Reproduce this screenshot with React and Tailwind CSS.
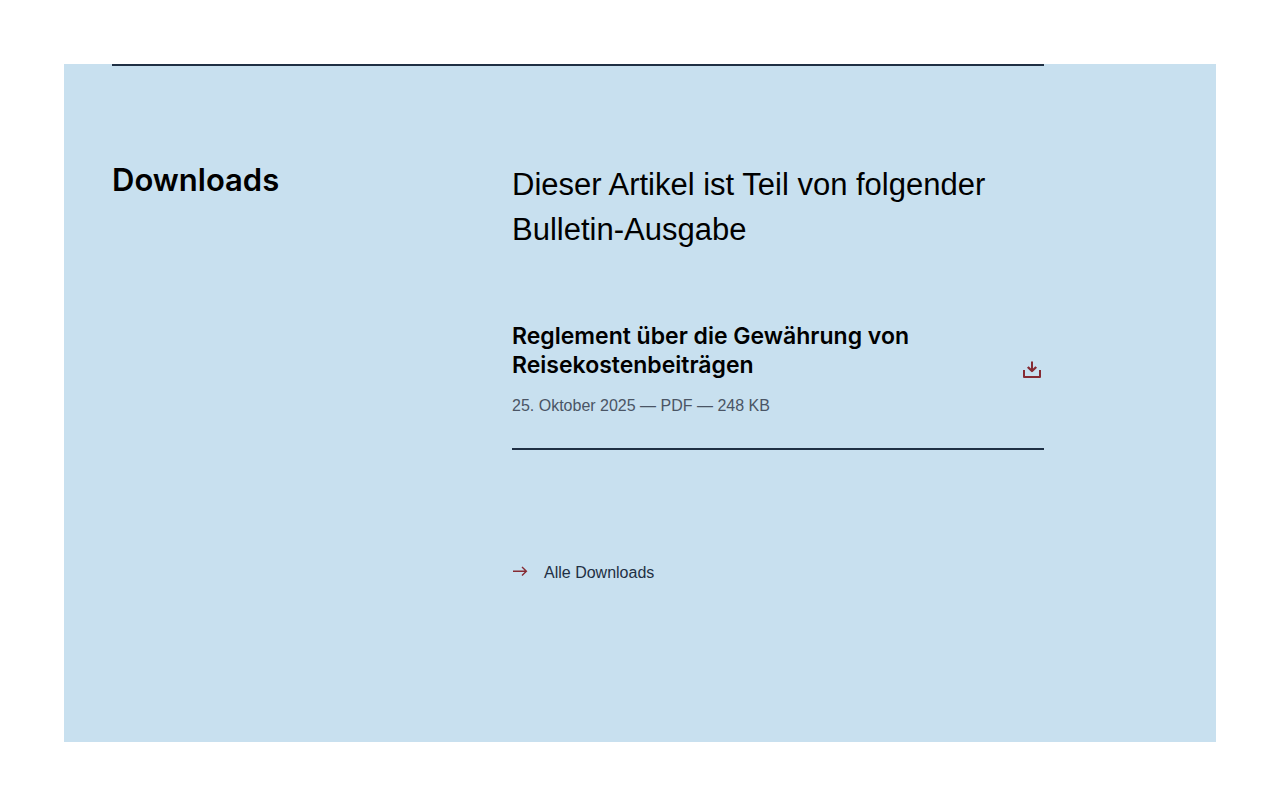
function ArrowIcon() {
  return (
    <svg className="size-4 shrink-0 text-[#862b33]" viewBox="0 0 16 16" fill="none" stroke="currentColor" strokeWidth="1.4" aria-hidden="true">
      <path d="M1 6.3H14.5M10 2L14.4 6.3L10 10.6" />
    </svg>
  );
}

function DownloadIcon() {
  return (
    <svg className="size-6" viewBox="0 0 24 24" fill="none" stroke="currentColor" strokeWidth="2" strokeLinejoin="round" aria-hidden="true">
      <path d="M12 3.5V13M4 12V19H20V12" />
      <path d="M7.8 9L12 13L16.2 9" strokeWidth="2.4" />
    </svg>
  );
}

export default function App() {
  return (
    <main className="bg-white p-16 font-['Liberation_Sans',Arial,sans-serif]">
      <section className="bg-[#c8e0ef] pr-43 pb-[154px] pl-12">
        <div className="grid grid-cols-[100fr_133fr] border-t-2 border-[#1f3044] pt-24">
          <h2 className="font-['Inter',sans-serif] text-[31px] leading-9 font-semibold text-black">Downloads</h2>
          <div>
            <p className="text-[31px] leading-[45px] text-black">
              Dieser Artikel ist Teil von folgender Bulletin-Ausgabe
            </p>
            <article className="mt-[70px] flex items-center justify-between border-b-2 border-[#1f3044] pb-[30px]">
              <div>
                <h3 className="max-w-[420px] font-['Inter',sans-serif] text-[23px] leading-[29px] font-semibold text-black">
                  Reglement über die Gewährung von Reisekostenbeiträgen
                </h3>
                <p className="mt-[14px] text-base text-[#4a5565]">25. Oktober 2025 — PDF — 248 KB</p>
              </div>
              <a href="#download" aria-label="Reglement herunterladen" className="text-[#862b33]"><DownloadIcon /></a>
            </article>
            <a href="#downloads" className="mt-[111px] inline-flex items-center gap-4 text-base text-[#1f3044]">
              <ArrowIcon />
              Alle Downloads
            </a>
          </div>
        </div>
      </section>
    </main>
  );
}
